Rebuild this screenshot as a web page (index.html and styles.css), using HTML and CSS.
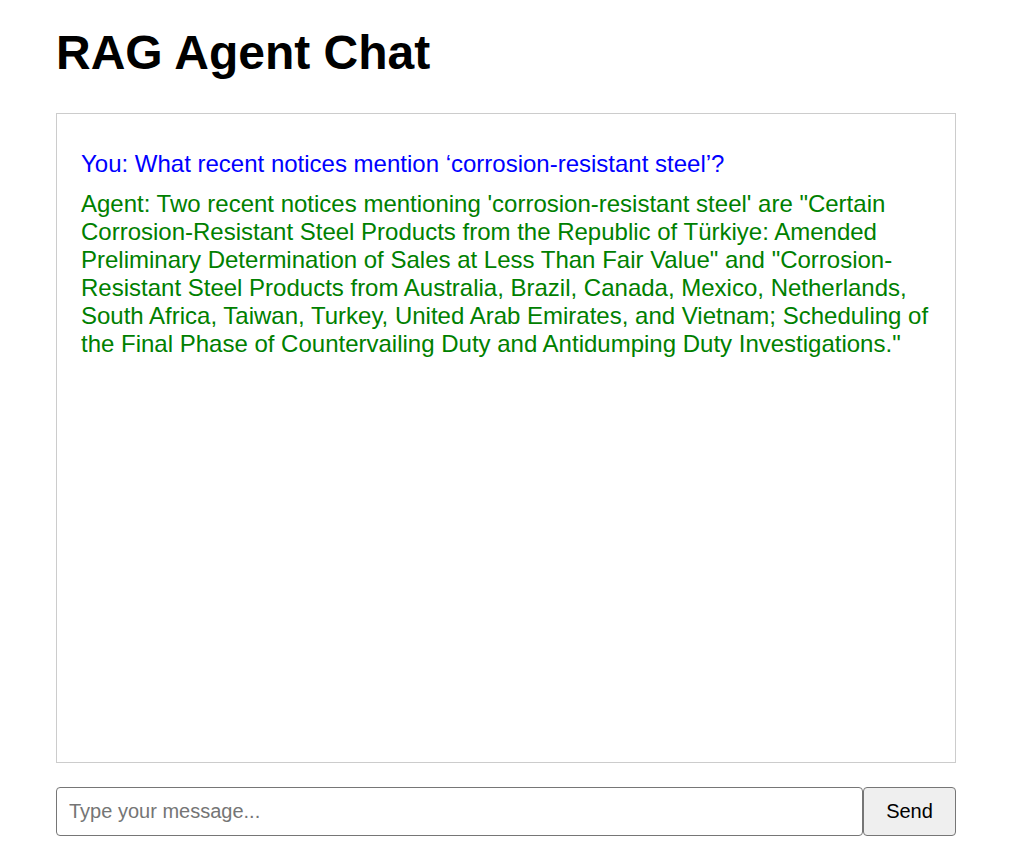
FILE: index.html
```html
<!DOCTYPE html>
<html lang="en">
<head>
<meta charset="utf-8">
<title>RAG Agent Chat</title>
<link rel="stylesheet" href="styles.css">
</head>
<body>
<div class="app">
  <h1 class="title">RAG Agent Chat</h1>
  <div class="chat">
    <p class="msg msg-user">You: What recent notices mention ‘corrosion-resistant steel’?</p>
    <p class="msg msg-agent">Agent: Two recent notices mentioning 'corrosion-resistant steel' are "Certain Corrosion-Resistant Steel Products from the Republic of Türkiye: Amended Preliminary Determination of Sales at Less Than Fair Value" and "Corrosion-Resistant Steel Products from Australia, Brazil, Canada, Mexico, Netherlands, South Africa, Taiwan, Turkey, United Arab Emirates, and Vietnam; Scheduling of the Final Phase of Countervailing Duty and Antidumping Duty Investigations."</p>
  </div>
  <form class="composer" onsubmit="return false;">
    <input class="composer-input" type="text" placeholder="Type your message...">
    <button class="composer-send" type="submit">Send</button>
  </form>
</div>
</body>
</html>
```

FILE: styles.css
```css
html, body {
  margin: 0;
  padding: 0;
  background: #ffffff;
}

body {
  font-family: "Liberation Sans", Arial, sans-serif;
  color: #000;
}

.app {
  width: 900px;
  margin-left: 56px;
}

.title {
  font-size: 48px;
  font-weight: bold;
  line-height: 54px;
  margin: 26px 0 33px 0;
}

.chat {
  box-sizing: border-box;
  height: 650px;
  border: 1px solid #cccccc;
  padding: 12px 24px;
  overflow-y: auto;
}

.msg {
  font-size: 24px;
  line-height: 28px;
  margin: 24px 0 12px 0;
}

.msg + .msg {
  margin-top: 0;
}

.msg-user {
  color: #0000ff;
}

.msg-agent {
  color: #008000;
}

.composer {
  display: flex;
  margin-top: 24px;
}

.composer-input {
  flex: 1;
  box-sizing: border-box;
  height: 49px;
  padding: 0 12px;
  font-family: "Liberation Sans", Arial, sans-serif;
  font-size: 20px;
  border: 1px solid #767676;
  border-radius: 4px;
  color: #000;
  outline: none;
}

.composer-input::placeholder {
  color: #757575;
}

.composer-send {
  box-sizing: border-box;
  width: 93px;
  height: 49px;
  font-family: "Liberation Sans", Arial, sans-serif;
  font-size: 20px;
  background: #efefef;
  border: 1px solid #767676;
  border-radius: 4px;
  color: #000;
  padding: 0;
}
```
